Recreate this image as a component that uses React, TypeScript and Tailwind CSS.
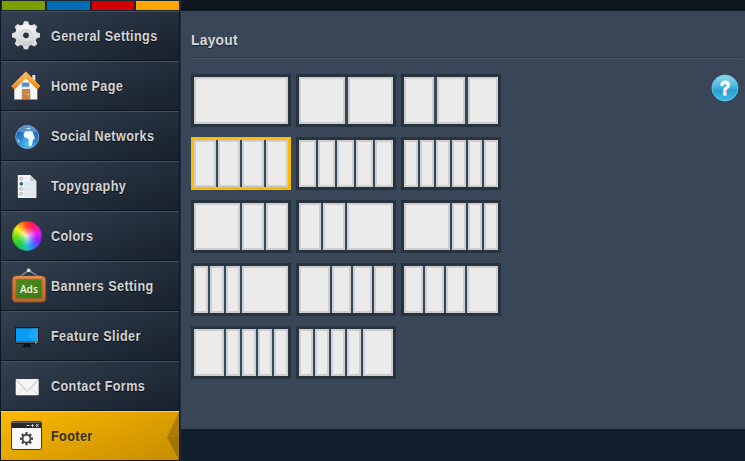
import type { ReactNode } from "react";

const Gear = () => (
  <svg width="50" height="48" viewBox="0 0 50 48">
    <defs>
      <linearGradient id="gearFill" x1="0" y1="0" x2="0" y2="1">
        <stop offset="0" stopColor="#fbfbfb" />
        <stop offset="1" stopColor="#c9cbcd" />
      </linearGradient>
    </defs>
    <g transform="translate(26 23.300)">
      <g fill="#dfe1e3">
        {[0, 45, 90, 135].map((a) => (
          <path key={a} d="M-3.400-10 L-2-14 H2 L3.400-10 V10 L2 14 H-2 L-3.400 10Z" transform={`rotate(${a})`} />
        ))}
      </g>
      <circle r="11" fill="url(#gearFill)" />
      <circle r="6.400" fill="#cfd1d4" />
      <circle cy=".4" r="5.600" fill="#dfe0e2" />
      <circle r="2.900" fill="#2b3440" />
    </g>
  </svg>
);

const House = () => (
  <svg width="50" height="48" viewBox="0 0 50 48">
    <defs>
      <linearGradient id="roof" x1="0" y1="0" x2="0" y2="1">
        <stop offset="0" stopColor="#ffc768" />
        <stop offset="1" stopColor="#e27f16" />
      </linearGradient>
    </defs>
    <g transform="translate(.800 0)">
      <path d="M31.500 13h3v9h-3z" fill="#e8e8e8" />
      <path d="M13.500 24.500 25 13l11.500 11.500V37.500h-23z" fill="#f7f7f7" />
      <path d="M25 9.500 39.500 24l-2.800 3.700L25 16.500 13.300 27.700 10.500 24z" fill="url(#roof)" />
      <path d="M25 10.500 39 24.300M25 10.500 11 24.300" stroke="#f9b14e" fill="none" />
      <path d="M21 20.500h7.500v4.500h-7.500z" fill="#4a8fca" stroke="#bfc9d3" strokeWidth=".8" />
      <path d="M21.500 27.500h7.500v10h-7.500z" fill="#cc8746" stroke="#a96329" strokeWidth=".7" />
      <circle cx="27.500" cy="32.500" r=".7" fill="#ffe0a0" />
    </g>
  </svg>
);

const Globe = () => (
  <svg width="50" height="48" viewBox="0 0 50 48">
    <defs>
      <radialGradient id="sea" cx=".5" cy=".8" r=".8">
        <stop offset="0" stopColor="#55c2f8" />
        <stop offset=".5" stopColor="#2480d0" />
        <stop offset="1" stopColor="#1c559d" />
      </radialGradient>
    </defs>
    <g transform="translate(1.200 0)">
      <circle cx="26" cy="25" r="11.500" fill="url(#sea)" stroke="#8db4d8" strokeWidth=".8" />
      <path d="M17 20q2-6 9-6.500t9 6.500l-9 1z" fill="#83b5e4" opacity=".55" />
      <path d="M22.500 21.500 24 19.500l5-.5 2.500 1 1.300 4 1 2-2.300 2.500-.5 4-2 2.500-1.500-1.500v-5.500l-1-1.500-2.500-.5-1.500-2z" fill="#edf7ff" />
      <path d="m24 16.500 4-1 2 1-3 1zM16 26l2 2 1 3-2-1z" fill="#b9dbf7" />
    </g>
  </svg>
);

const Page = () => (
  <svg width="50" height="48" viewBox="0 0 50 48">
    <g transform="translate(.800 -.500)">
      <path d="M17 13.500h12.500l6 6v17H17z" fill="#f4f5f6" />
      <path d="M23 20h12.500v16H23z" fill="#dce6ee" opacity=".7" />
      <path d="M29.500 13.500v6h6z" fill="#bfc4c9" />
      {[17, 22, 27, 32].map((y, i) => (
        <g key={y}>
          <circle cx="20.500" cy={y + 0.3} r="1.400" fill={i === 1 ? "#275b98" : "#fff"} stroke={i === 1 ? "#275b98" : "#8b9198"} strokeWidth=".8" />
          <path d={`M24 ${y + 0.5}h${i === 0 ? 5 : 9}`} stroke="#dfe3e6" />
        </g>
      ))}
    </g>
  </svg>
);

const ColorWheel = () => (
  <div className="ml-3 mt-[9px] size-[30px] rounded-full bg-[radial-gradient(circle_closest-side,#ffffffcc_0%,#ffffff73_25%,#ffffff00_65%,#00000000_85%,#00000033_100%),conic-gradient(from_0deg,#ff3a20,#ff1878_35deg,#e51cf0_75deg,#9020ff_110deg,#4070f8_145deg,#20c4d0_180deg,#20cf35_225deg,#66dd1a_265deg,#f3ee20_305deg,#ff8c20_335deg,#ff3a20)]" />
);

const AdsBoard = () => (
  <svg width="50" height="48" viewBox="0 0 50 48">
    <defs>
      <linearGradient id="wood" x1="0" y1="0" x2="0" y2="1">
        <stop offset="0" stopColor="#d98142" />
        <stop offset="1" stopColor="#bd6329" />
      </linearGradient>
      <linearGradient id="board" x1="0" y1="0" x2="1" y2="1">
        <stop offset="0" stopColor="#4b8b20" />
        <stop offset="1" stopColor="#3d7a16" />
      </linearGradient>
    </defs>
    <g transform="translate(.700 -.500)">
      <path d="M19 15 28 9 38 15" fill="none" stroke="#8d949c" strokeWidth="1.200" />
      <circle cx="28" cy="8.800" r="1.900" fill="#dfe1e3" />
      <rect x="11.500" y="14.500" width="33.500" height="26" rx="4" fill="url(#wood)" stroke="#9c5220" strokeWidth=".8" />
      <path d="M15 15.500h26" stroke="#efa96d" />
      <rect x="15.500" y="18" width="25.500" height="19" rx="1" fill="url(#board)" stroke="#8d6a2a" strokeWidth=".8" />
      <text x="28.200" y="31.500" textAnchor="middle" fill="#f2f5ed" fontSize="11" fontFamily="Open Sans, sans-serif" fontWeight="600" textLength="18" lengthAdjust="spacingAndGlyphs">Ads</text>
    </g>
  </svg>
);

const Monitor = () => (
  <svg width="50" height="48" viewBox="0 0 50 48">
    <g transform="translate(0 -1)">
      <path d="M15 16h24v17H15z" fill="#15191e" />
      <path d="M16 17.300h22v13.500H16z" fill="#079bf5" />
      <path d="M32 17.300h6v13.500h-3L28 26z" fill="#38b4ff" opacity=".5" />
      <path d="M15 31.500h24" stroke="#4e555c" />
      <path d="M24 33h6v2h-6zM22.500 34.500h9v1.700h-9z" fill="#10151a" />
      <path d="M35 32h2" stroke="#b5d51b" />
    </g>
  </svg>
);

const Envelope = () => (
  <svg width="50" height="48" viewBox="0 0 50 48">
    <rect x="15.700" y="17" width="23" height="16.300" rx="1" fill="#f4f4f4" />
    <path d="m16.500 18 10.700 11.500L38 18" fill="none" stroke="#bdbdbd" />
    <path d="m16.500 32.500 7.500-6.500m14 6.500-7.500-6.500" fill="none" stroke="#dcdcdc" />
  </svg>
);

const BrowserWindow = () => (
  <svg width="50" height="48" viewBox="0 0 50 48">
    <g transform="translate(0 -1)">
      <rect x="11.500" y="10.500" width="30" height="28" rx="1.500" fill="#f8f8f8" stroke="#493a1b" />
      <path d="M12 11h29v6H12z" fill="#292929" />
      <path d="M12 11.500h29" stroke="#656565" />
      <path d="M26.500 14.500h3M31 14.500h3M32.500 13v3M36 13l2.500 3m0-3L36 16" stroke="#ddd" strokeWidth=".9" />
      <g transform="translate(26.500 27.700)">
        {[0, 45, 90, 135].map((a) => (
          <path key={a} d="M-1.200-6.500h2.400v13h-2.400z" fill="#484848" transform={`rotate(${a})`} />
        ))}
        <circle r="3.900" fill="#f8f8f8" stroke="#484848" strokeWidth="1.800" />
      </g>
    </g>
  </svg>
);

const items: { label: string; icon: ReactNode }[] = [
  { label: "General Settings", icon: <Gear /> },
  { label: "Home Page", icon: <House /> },
  { label: "Social Networks", icon: <Globe /> },
  { label: "Topygraphy", icon: <Page /> },
  { label: "Colors", icon: <ColorWheel /> },
  { label: "Banners Setting", icon: <AdsBoard /> },
  { label: "Feature Slider", icon: <Monitor /> },
  { label: "Contact Forms", icon: <Envelope /> },
];

// Column widths of each footer layout, in pixels.
const layouts = [
  [94],
  [46, 45],
  [30, 28, 30],
  [22, 22, 22, 22],
  [17, 17, 17, 17, 18],
  [14, 14, 14, 14, 14, 14],
  [46, 22, 22],
  [22, 22, 46],
  [46, 14, 14, 14],
  [14, 14, 14, 46],
  [31, 19, 19, 19],
  [19, 19, 19, 31],
  [30, 14, 14, 14, 14],
  [14, 14, 14, 14, 30],
];

function LayoutTile({ columns, selected }: { columns: number[]; selected: boolean }) {
  return (
    <button className={`flex h-[53px] w-[100px] justify-between border-[3px] bg-[#35475a] ${selected ? "border-[#ffba00]" : "border-[#27333f]"}`}>
      {columns.map((width, i) => (
        <span key={i} className="h-full border-2 border-[#cecece] bg-[#ebebeb]" style={{ width }} />
      ))}
    </button>
  );
}

export default function App() {
  return (
    <div className="flex h-[461px] w-[745px] overflow-hidden bg-[#121e2c] font-['Liberation_Sans',Arial,sans-serif]">
      <aside className="w-[181px] shrink-0 border-r border-[#1f2d3d] bg-[#0e1927] pl-px">
        <div className="flex h-[11px] gap-[2px] bg-[#1b2531] py-px pl-px">
          <span className="w-[43px] bg-[#7b9f00]" />
          <span className="w-[43px] bg-[#006db5]" />
          <span className="w-[42px] bg-[#d40000]" />
          <span className="w-[43px] bg-[#ffa600]" />
        </div>
        <nav className="w-[178px]">
          {items.map(({ label, icon }) => (
            <a key={label} className="flex h-[50px] border-b border-t border-b-[#0d1723] border-t-[#435060] bg-linear-160 from-[#344050] to-[#17212d]">
              <span className="-ml-px h-12 w-[51px] shrink-0">{icon}</span>
              <span className="origin-left scale-x-[0.9] whitespace-nowrap pt-[14px] text-[14px] font-bold leading-[20px] tracking-[0.45px] text-[#d4d4d4] [text-shadow:0_1px_1px_#05090e]">{label}</span>
            </a>
          ))}
          <a className="relative flex h-[49px] border-t border-[#ffcf45] bg-linear-160 from-[#fbb900] to-[#c78d00]">
            <span className="-ml-px h-12 w-[51px] shrink-0"><BrowserWindow /></span>
            <span className="origin-left scale-x-[0.9] pt-[14px] text-[14px] font-bold leading-[20px] tracking-[0.45px] text-[#333027] [text-shadow:0_1px_0_#e5ad24]">Footer</span>
            <svg className="absolute right-0 top-0" width="12" height="48" viewBox="0 0 12 48">
              <path d="M12 0v48L0 25z" fill="#ac7c06" />
              <path d="M12 25v23L0 25z" fill="#8b6405" opacity=".3" />
            </svg>
          </a>
        </nav>
      </aside>
      <main className="flex min-w-0 flex-1 flex-col">
        <div className="h-[11px] bg-[#0f171f]" />
        <section className="h-[418px] bg-[#394657] pl-[10px]">
          <div className="mr-1 h-[47px] border-b border-[#2e3948] pt-[19px] shadow-[0_1px_0_#465364]">
            <h1 className="origin-left scale-x-[0.92] text-[15px] font-bold leading-[20px] tracking-[0.3px] text-[#d8d8d8] [text-shadow:0_1px_1px_#17202b]">Layout</h1>
          </div>
          <div className="flex justify-between pt-4">
            <div className="grid grid-cols-[repeat(3,100px)] gap-x-[5px] gap-y-[10px]">
              {layouts.map((columns, i) => <LayoutTile key={i} columns={columns} selected={i === 3} />)}
            </div>
            <svg className="mr-[5px]" width="30" height="30" viewBox="0 0 30 30">
              <defs>
                <linearGradient id="help" x1="0" y1="0" x2="0" y2="1">
                  <stop offset="0" stopColor="#8ddbed" />
                  <stop offset=".48" stopColor="#46b0d8" />
                  <stop offset=".6" stopColor="#2a9fd2" />
                  <stop offset="1" stopColor="#3fb8e6" />
                </linearGradient>
              </defs>
              <circle cx="15" cy="14.500" r="13.800" fill="#1f4b68" />
              <circle cx="15" cy="14" r="13" fill="url(#help)" stroke="#6ecbe8" strokeWidth=".8" />
              <text x="15" y="21" textAnchor="middle" fill="#fff" stroke="#fff" strokeWidth=".9" fontSize="20" fontWeight="700" textLength="10.500" lengthAdjust="spacingAndGlyphs" fontFamily="Liberation Sans, Arial, sans-serif">?</text>
            </svg>
          </div>
        </section>
      </main>
    </div>
  );
}
